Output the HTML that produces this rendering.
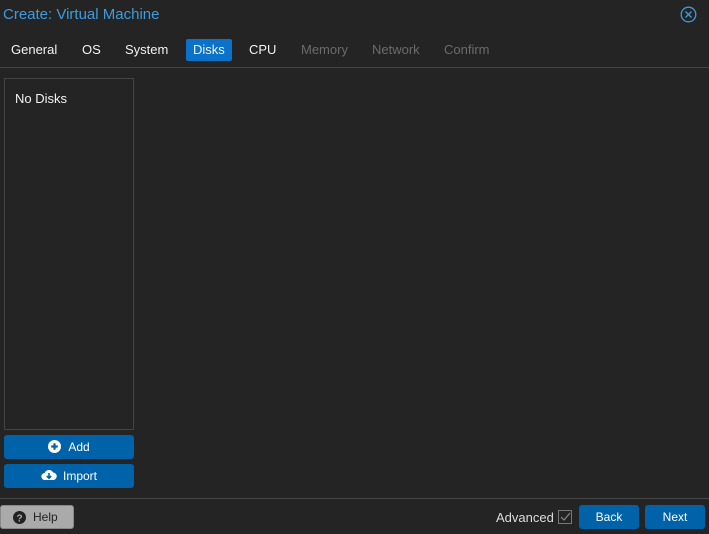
<!DOCTYPE html>
<html><head><style>
*{box-sizing:border-box;margin:0;padding:0}
body{width:709px;height:534px;background:#242424;font-family:"Liberation Sans",sans-serif;font-size:13px;color:#f2f2f2;position:relative;overflow:hidden}
.a{position:absolute}
.title{left:3px;top:6px;font-size:15px;color:#3c9ce0}
.tab{top:39px;height:22px;line-height:22px;padding:0 7px}
.dis{color:#6b6b6b}
.btn{background:#0062a8;border-radius:3px;color:#fff;text-align:center;line-height:25px;height:24px;font-size:12px}
</style></head><body>
<div class="a title">Create: Virtual Machine</div>
<svg class="a" style="left:680px;top:6px" width="17" height="17" viewBox="0 0 17 17"><circle cx="8.5" cy="8.5" r="7.3" fill="none" stroke="#3c9ce0" stroke-width="1.3"/><path d="M5.5 5.5L11.5 11.5M11.5 5.5L5.5 11.5" stroke="#3c9ce0" stroke-width="1.3"/></svg>
<div class="a tab" style="left:4px">General</div>
<div class="a tab" style="left:75px">OS</div>
<div class="a tab" style="left:118px">System</div>
<div class="a tab" style="left:186px;width:46px;background:#0a72c8;border-radius:2px">Disks</div>
<div class="a tab" style="left:242px">CPU</div>
<div class="a tab dis" style="left:294px">Memory</div>
<div class="a tab dis" style="left:365px">Network</div>
<div class="a tab dis" style="left:437px">Confirm</div>
<div class="a" style="left:0;top:67px;width:709px;height:1px;background:#444"></div>
<div class="a" style="left:4px;top:78px;width:130px;height:352px;border:1px solid #444"></div>
<div class="a" style="left:15px;top:91px">No Disks</div>
<div class="a btn" style="left:4px;top:435px;width:130px"><svg width="13" height="13" viewBox="0 0 12 12" style="vertical-align:-2px;margin-right:7px"><circle cx="6" cy="6" r="6" fill="#fff"/><path d="M6 3v6M3 6h6" stroke="#0062a8" stroke-width="2"/></svg>Add</div>
<div class="a btn" style="left:4px;top:464px;width:130px"><svg width="16" height="12" viewBox="0 0 16 12" style="vertical-align:-1px;margin-right:6px"><path d="M4 11a3.5 3.5 0 0 1-.3-7A4.5 4.5 0 0 1 12 3.5 3.7 3.7 0 0 1 12 11z" fill="#fff"/><path d="M8 4v5M5.8 7L8 9.2 10.2 7" stroke="#0062a8" stroke-width="1.6" fill="none"/></svg>Import</div>
<div class="a" style="left:0;top:498px;width:709px;height:1px;background:#444"></div>
<div class="a" style="left:0;top:505px;width:74px;height:24px;background:#aaa;border:1px solid #888;border-radius:3px;color:#222;line-height:23px;padding-left:32px;font-size:12px">Help</div>
<svg class="a" style="left:13px;top:511px" width="13" height="13" viewBox="0 0 13 13"><circle cx="6.5" cy="6.5" r="6.5" fill="#222"/><text x="6.5" y="10.5" font-size="10" font-weight="bold" fill="#aaa" text-anchor="middle" font-family="Liberation Sans">?</text></svg>
<div class="a" style="left:496px;top:510px;color:#ddd">Advanced</div>
<div class="a" style="left:558px;top:510px;width:14px;height:14px;border:1px solid #777"></div>
<svg class="a" style="left:558px;top:510px" width="14" height="14"><path d="M3 7l3 3 6-7" stroke="#888" stroke-width="1.2" fill="none"/></svg>
<div class="a btn" style="left:579px;top:505px;width:60px">Back</div>
<div class="a btn" style="left:645px;top:505px;width:60px">Next</div>
</body></html>
